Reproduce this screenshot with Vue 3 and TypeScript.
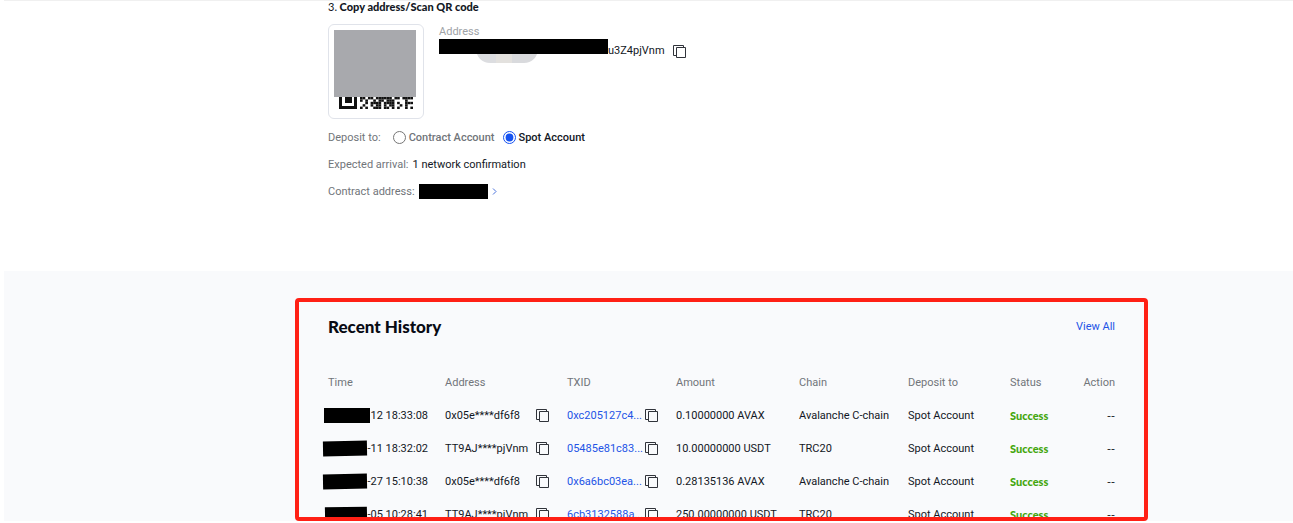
<script setup lang="ts">
import { ref } from 'vue'

interface Deposit {
  time: string
  mask: string
  address: string
  txid: string
  amount: string
  chain: string
}

const account = ref('spot')

const columns = ['Time', 'Address', 'TXID', 'Amount', 'Chain', 'Deposit to', 'Status', 'Action']

const deposits: Deposit[] = [
  { time: '12 18:33:08', mask: 'wide', address: '0x05e****df6f8', txid: '0xc205127c4...', amount: '0.10000000 AVAX', chain: 'Avalanche C-chain' },
  { time: '-11 18:32:02', mask: 'tilt', address: 'TT9AJ****pjVnm', txid: '05485e81c83...', amount: '10.00000000 USDT', chain: 'TRC20' },
  { time: '-27 15:10:38', mask: 'tilt', address: '0x05e****df6f8', txid: '0x6a6bc03ea...', amount: '0.28135136 AVAX', chain: 'Avalanche C-chain' },
  { time: '-05 10:28:41', mask: 'narrow', address: 'TT9AJ****pjVnm', txid: '6cb3132588a...', amount: '250.00000000 USDT', chain: 'TRC20' },
]

// Data modules to the right of the finder square
const modules = [
  '##.##.######.##.####',
  '#.#..#.##.###....#..',
  '..#.####.####.#..###',
  '.#..#.##.#.##..#.#..',
  '#.#..###.##.#.#..#.#',
]

const cells = modules.flatMap((line, y) =>
  [...line].map((mark, x) => ({ mark, x, y })).filter((cell) => cell.mark === '#'),
)
const copyIcon = 'M3.5 2.5h9v10h-9zM3 10.5H.5V.5h10V2'
</script>

<template>
  <main class="page">
    <section class="deposit">
      <h2 class="step"><span>3.</span> Copy address/Scan QR code</h2>
      <div class="target">
        <div class="qr">
          <div class="qr-cover"></div>
          <svg class="qr-code" viewBox="0 0 74 12" aria-hidden="true">
            <path d="M0 0h3v9h12V0h3v12H0zM6 0h7v6H6z" />
            <g transform="translate(21 0) scale(2.650 2.400)">
              <rect v-for="cell in cells" :key="`${cell.x}-${cell.y}`" :x="cell.x" :y="cell.y" width="1" height="1" />
            </g>
          </svg>
        </div>
        <div class="recipient">
          <span class="caption">Address</span>
          <div class="recipient-line">
            <span class="smudge"></span>
            <span class="redaction long"></span>
            <span>u3Z4pjVnm</span>
            <button class="copy" type="button" aria-label="Copy address">
              <svg viewBox="0 0 13 13"><path :d="copyIcon" /></svg>
            </button>
          </div>
        </div>
      </div>
      <div class="line">
        <span class="lead">Deposit to:</span>
        <label><input v-model="account" type="radio" name="account" value="contract" />Contract Account</label>
        <label class="selected"><input v-model="account" type="radio" name="account" value="spot" />Spot Account</label>
      </div>
      <div class="line">Expected arrival: <span class="value">1 network confirmation</span></div>
      <div class="line">
        Contract address:
        <span class="redaction contract"></span>
        <svg class="chevron" viewBox="0 0 5 7"><path d="M1 .5l3 3-3 3" /></svg>
      </div>
    </section>

    <section class="history">
      <div class="panel">
        <header class="panel-head">
          <h1>Recent History</h1>
          <a href="#">View All</a>
        </header>
        <table>
          <colgroup>
            <col v-for="name in columns" :key="name" :class="`col-${name.toLowerCase().replace(' ', '-')}`" />
          </colgroup>
          <thead>
            <tr><th v-for="name in columns" :key="name" scope="col">{{ name }}</th></tr>
          </thead>
          <tbody>
            <tr v-for="row in deposits" :key="row.txid">
              <td><div class="time"><span class="redaction" :class="row.mask"></span>{{ row.time }}</div></td>
              <td>
                <div class="copyable">
                  <span class="hash">{{ row.address }}</span>
                  <button class="copy" type="button" aria-label="Copy address">
                    <svg viewBox="0 0 13 13"><path :d="copyIcon" /></svg>
                  </button>
                </div>
              </td>
              <td>
                <div class="copyable">
                  <a class="tx" href="#">{{ row.txid }}</a>
                  <button class="copy" type="button" aria-label="Copy transaction ID">
                    <svg viewBox="0 0 13 13"><path :d="copyIcon" /></svg>
                  </button>
                </div>
              </td>
              <td>{{ row.amount }}</td>
              <td>{{ row.chain }}</td>
              <td>Spot Account</td>
              <td class="success">Success</td>
              <td class="none">--</td>
            </tr>
          </tbody>
        </table>
      </div>
    </section>
  </main>
</template>

<style>
body {
  margin: 0;
  background: #fff;
}
</style>

<style scoped>
.page {
  box-sizing: border-box;
  display: flex;
  flex-direction: column;
  height: 100vh;
  padding: 0 0 2px 4px;
  overflow: hidden;
  font: 11px/16px Roboto, "Liberation Sans", sans-serif;
  color: #121724;
}
a {
  color: #2354e6;
  text-decoration: none;
}
.deposit {
  box-sizing: border-box;
  flex: none;
  height: 271px;
  padding-left: 324px;
  border-top: 1px solid #f0f0f0;
  color: #71757a;
}
.step {
  margin: 0;
  font: 900 11px/12px Lato, sans-serif;
  color: #121724;
}
.step span {
  font-weight: 400;
}
.target {
  display: flex;
  gap: 15px;
  margin-top: 11px;
}
.qr {
  box-sizing: border-box;
  width: 96px;
  height: 95px;
  padding: 5px;
  border: 1px solid #e0e3ea;
  border-radius: 6px;
}
.qr-cover {
  width: 82px;
  height: 67px;
  background: #a8a9ad;
}
.qr-code {
  display: block;
  width: 74px;
  height: 12px;
  margin-left: 5px;
  fill: #111;
}
.recipient {
  display: flex;
  flex-direction: column;
}
.caption {
  line-height: 15px;
  color: #a0a3a7;
}
.recipient-line {
  position: relative;
  display: flex;
  align-items: center;
  height: 24px;
  color: #121724;
}
.smudge {
  position: absolute;
  top: 0;
  left: 37px;
  width: 62px;
  height: 24px;
  border-radius: 0 0 14px 14px;
  background: linear-gradient(90deg, #dcdde0 0 20px, #e3e1de 20px 36px, #d9dadd 36px);
}
.redaction {
  position: relative;
  display: inline-block;
  flex: none;
  height: 15px;
  background: #000;
}
.long {
  align-self: flex-start;
  width: 169px;
}
.copy {
  display: flex;
  flex: none;
  padding: 0;
  border: 0;
  background: none;
  color: inherit;
  cursor: pointer;
}
.copy svg {
  width: 13px;
  height: 13px;
  fill: none;
  stroke: #30333a;
}
.recipient-line .copy {
  margin-left: 8px;
}
.line {
  display: flex;
  align-items: center;
  gap: 4px;
  height: 27px;
}
.target + .line {
  margin-top: 5px;
}
.lead {
  margin-right: 8px;
}
label {
  display: flex;
  align-items: center;
  gap: 3px;
  margin-right: 4px;
  font-weight: 500;
}
.selected,
.value {
  color: #121724;
}
input {
  width: 13px;
  height: 13px;
  margin: 0;
  accent-color: #1652f0;
}
.contract {
  width: 69px;
}
.chevron {
  width: 5px;
  height: 7px;
  fill: none;
  stroke: #4a72dc;
}
.history {
  box-sizing: border-box;
  display: flex;
  flex: 1;
  min-height: 0;
  padding: 27px 145px 0 291px;
  background: #f9fafc;
}
.panel {
  box-sizing: border-box;
  flex: 1;
  padding: 14px 29px 0;
  border: 4px solid #ff2015;
  border-radius: 4px;
  overflow: hidden;
}
.panel-head {
  display: flex;
  align-items: center;
  justify-content: space-between;
}
h1 {
  margin: 0;
  font: 900 17px/22px Lato, sans-serif;
  color: #080b14;
}
table {
  width: 100%;
  margin-top: 29px;
  border-collapse: collapse;
  table-layout: fixed;
  white-space: nowrap;
}
th,
td {
  height: 33px;
  padding: 0;
  text-align: left;
  font-weight: 400;
}
th {
  height: 32px;
  color: #71757a;
}
th:last-child,
td:last-child {
  text-align: right;
}
.col-time { width: 117px; }
.col-address { width: 122px; }
.col-txid { width: 109px; }
.col-amount { width: 123px; }
.col-chain { width: 109px; }
.col-deposit-to { width: 102px; }
.col-status { width: 64px; }
.col-action { width: 41px; }
.time {
  display: flex;
  align-items: center;
  justify-content: flex-end;
  width: 100px;
}
.wide { width: 46px; }
.tilt {
  width: 44px;
  transform: rotate(-1deg);
}
.narrow {
  width: 42px;
  transform: rotate(-1deg);
}
.copyable {
  display: flex;
  align-items: center;
}
.hash {
  width: 91px;
}
.tx {
  width: 78px;
}
.success {
  font-family: Lato, sans-serif;
  font-weight: 900;
  color: #43a60c;
}
.none {
  font-family: "DejaVu Sans", sans-serif;
}
</style>
